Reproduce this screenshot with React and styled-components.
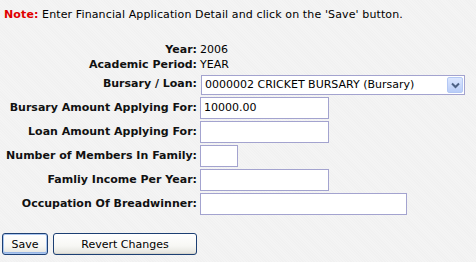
import React from "react";
import styled, { createGlobalStyle } from "styled-components";

const Global = createGlobalStyle`
  html, body {
    margin: 0;
    padding: 0;
    background: #f4f4f4;
  }
  body {
    font-family: "DejaVu Sans", Verdana, sans-serif;
    font-size: 11px;
    color: #000;
  }
`;

const Page = styled.div`
  padding: 8px 0 0 2px;
  width: 474px;
  height: 254px;
  background-color: #f4f4f4;
  background-image: repeating-linear-gradient(45deg, rgba(0,0,0,0.012) 0 1px, transparent 1px 2px);
`;

const Note = styled.p`
  margin: 0 0 0 2px;
  line-height: 14px;
  white-space: nowrap;
  letter-spacing: 0.12px;
`;

const NoteLabel = styled.b`
  color: #e00000;
`;

const Form = styled.div`
  display: grid;
  grid-template-columns: 195px auto;
  column-gap: 3px;
  row-gap: 2px;
  margin-top: 21px;
  justify-content: start;
`;

const Label = styled.div`
  font-weight: bold;
  text-align: right;
  white-space: nowrap;
  line-height: ${(p) => (p.tall ? "22px" : "13px")};
  color: #111;
`;

const Value = styled.div`
  line-height: 13px;
  white-space: nowrap;
`;

const Field = styled.div`
  display: flex;
  align-items: ${(p) => (p.bottom ? "flex-end" : "center")};
  height: 22px;
`;

const TextBox = styled.div`
  box-sizing: border-box;
  width: ${(p) => p.w}px;
  height: 22px;
  border: 1px solid #a3a3cf;
  background: #fff;
  padding: 0 3px;
  line-height: 20px;
  white-space: nowrap;
`;

const SelectBox = styled.div`
  box-sizing: border-box;
  display: flex;
  align-items: center;
  width: 264px;
  height: 20px;
  margin-left: 1px;
  border: 1px solid #a3a3cf;
  background: #fff;
  padding: 0 1px 0 3px;
`;

const SelectText = styled.span`
  flex: 1;
  white-space: nowrap;
  line-height: 18px;
`;

const ArrowButton = styled.span`
  box-sizing: border-box;
  width: 16px;
  height: 16px;
  display: flex;
  align-items: center;
  justify-content: center;
  border: 1px solid #b4c8f4;
  border-radius: 2px;
  background: linear-gradient(#dbe6ff, #b9cdf8);
`;

const Buttons = styled.div`
  display: flex;
  gap: 5px;
  margin-top: 18px;
`;

const Button = styled.button`
  box-sizing: border-box;
  height: 22px;
  width: ${(p) => p.w}px;
  padding: 0;
  font-family: "DejaVu Sans", Verdana, sans-serif;
  font-size: 11px;
  color: #000;
  border: 1px solid #1c3f73;
  border-radius: 3px;
  background: linear-gradient(#ffffff 0%, #f7f7f4 60%, #e3e2dc 100%);
  box-shadow: ${(p) => (p.primary ? "inset 0 0 0 1px #aac6ef, inset 0 -1px 0 1px #98b6e6" : "inset 0 -1px 0 #d6d5cd")};
`;

const rows = [
  { label: "Bursary Amount Applying For:", w: 129, value: "10000.00" },
  { label: "Loan Amount Applying For:", w: 129, value: "" },
  { label: "Number of Members In Family:", w: 38, value: "" },
  { label: "Famliy Income Per Year:", w: 129, value: "" },
  { label: "Occupation Of Breadwinner:", w: 207, value: "" },
];

export default function App() {
  return (
    <Page>
      <Global />
      <Note>
        <NoteLabel>Note:</NoteLabel> Enter Financial Application Detail and click on the 'Save' button.
      </Note>
      <Form>
        <Label>Year:</Label>
        <Value>2006</Value>
        <Label>Academic Period:</Label>
        <Value>YEAR</Value>
        <Label tall>Bursary / Loan:</Label>
        <Field bottom>
          <SelectBox>
            <SelectText>0000002 CRICKET BURSARY (Bursary)</SelectText>
            <ArrowButton>
              <svg width="9" height="7" viewBox="0 0 9 7">
                <path d="M1 1.5 L4.5 5 L8 1.5" fill="none" stroke="#4d6185" strokeWidth="2" />
              </svg>
            </ArrowButton>
          </SelectBox>
        </Field>
        {rows.map((r) => (
          <React.Fragment key={r.label}>
            <Label tall>{r.label}</Label>
            <Field>
              <TextBox w={r.w}>{r.value}</TextBox>
            </Field>
          </React.Fragment>
        ))}
      </Form>
      <Buttons>
        <Button primary w={46}>Save</Button>
        <Button w={144}>Revert Changes</Button>
      </Buttons>
    </Page>
  );
}
